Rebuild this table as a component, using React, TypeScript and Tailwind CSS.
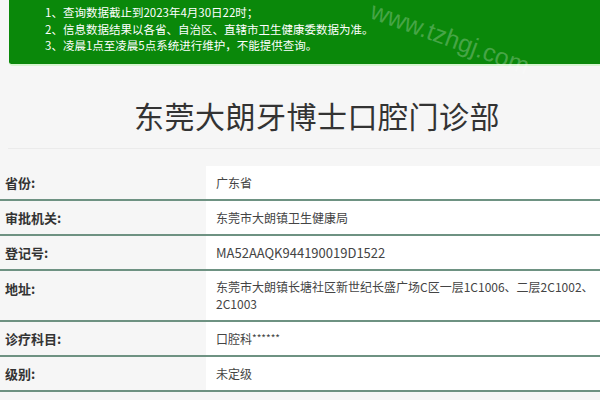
import React from "react";

const rows: { label: string; value: React.ReactNode; tall?: boolean }[] = [
    { label: "省份:", value: "广东省" },
    { label: "审批机关:", value: "东莞市大朗镇卫生健康局" },
    { label: "登记号:", value: <span className="text-[13px]">MA52AAQK944190019D1522</span> },
    {
        label: "地址:",
        value: "东莞市大朗镇长塘社区新世纪长盛广场C区一层1C1006、二层2C1002、2C1003",
        tall: true,
    },
    {
        label: "诊疗科目:",
        value: (
            <>
                口腔科<span className="text-[10px] align-top">******</span>
            </>
        ),
    },
    { label: "级别:", value: "未定级" },
];

export default function App() {
    return (
        <main
            className="relative w-[600px] h-[400px] overflow-hidden bg-[#f6f6f6] text-[#333]"
            style={{ fontFamily: '"Noto Sans CJK SC", "Open Sans", sans-serif' }}
        >
            <div className="ml-[9px] h-[66px] rounded-bl-[4px] bg-[#0a880a] border-b-2 border-[#d6f5d0] pl-9 pt-[4px] text-[11.5px] leading-[16.5px] text-white">
                <p>1、查询数据截止到2023年4月30日22时；</p>
                <p>2、信息数据结果以各省、自治区、直辖市卫生健康委数据为准。</p>
                <p>3、凌晨1点至凌晨5点系统进行维护，不能提供查询。</p>
            </div>

            <div className="ml-[8px] h-[83px] flex items-center justify-center border-b border-[#ebebeb] pl-[26px] pt-[16px]">
                <h1 className="text-[30px] leading-none tracking-[0.5px] text-[#333]">东莞大朗牙博士口腔门诊部</h1>
            </div>

            <div className="mt-[17px]">
                {rows.map((r) => (
                    <div key={r.label} className="flex border-b-2 border-[#6e9282]">
                        <div className={`w-[206px] shrink-0 pl-[5px] text-[13px] font-bold text-[#333] ${r.tall ? "pt-[8px] h-[49px]" : "flex items-center h-[33px]"}`}>
                            {r.label}
                        </div>
                        <div className={`flex-1 bg-white pl-[10px] pr-[2px] text-[12px] text-[#444] ${r.tall ? "pt-[7px] leading-[17px] h-[49px]" : "flex items-center h-[33px]"}`}>
                            <span>{r.value}</span>
                        </div>
                    </div>
                ))}
            </div>

            <div
                className="pointer-events-none absolute left-[376px] top-[-2px] origin-top-left rotate-[20deg] text-[25px] leading-none text-white/25"
                style={{ fontFamily: '"Liberation Sans", sans-serif' }}
            >
                www.tzhgj.com
            </div>
        </main>
    );
}
